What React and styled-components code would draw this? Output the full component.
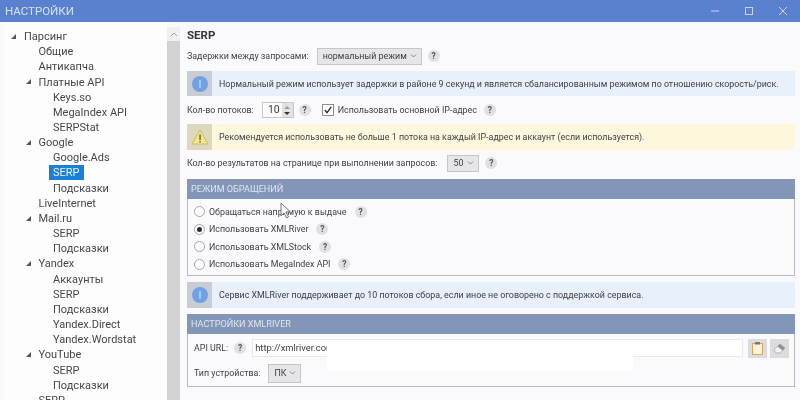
import React from 'react';
import styled, { createGlobalStyle } from 'styled-components';

const GlobalStyle = createGlobalStyle`
    html, body {
        margin: 0;
        padding: 0;
        width: 800px;
        height: 400px;
        overflow: hidden;
        background: #fafafc;
    }
    * {
        box-sizing: border-box;
    }
`;

const Window = styled.div`
    width: 800px;
    height: 400px;
    display: flex;
    flex-direction: column;
    overflow: hidden;
    position: relative;
    font-family: Roboto, 'Noto Sans', sans-serif;
    font-size: 8.9px;
    color: #404045;
    background: #fafafc;
    filter: blur(0.4px);
`;

const TitleBar = styled.div`
    height: 22px;
    flex: none;
    background: #5a80d0;
    display: flex;
    align-items: center;
    padding: 0 0 0 5px;
`;

const TitleText = styled.div`
    flex: 1;
    color: #d5e0f5;
    font-size: 11.5px;
`;

const WinButton = styled.div`
    width: 34px;
    height: 22px;
    display: flex;
    align-items: center;
    justify-content: center;
`;

const Body = styled.div`
    flex: 1;
    display: flex;
    min-height: 0;
`;

const TreePanel = styled.div`
    width: 163px;
    flex: none;
    margin-left: 4px;
    background: #fdfdfe;
    padding-top: 7px;
    overflow: hidden;
    font-size: 11px;
    color: #47474b;
`;

const TreeRow = styled.div`
    height: 15.17px;
    display: flex;
    align-items: center;
    padding-left: ${p => 16 + p.$level * 14.5}px;
    position: relative;
    white-space: nowrap;
`;

const TreeLabel = styled.span`
    padding: 0 4px;
    line-height: 15px;
    background: ${p => (p.$selected ? '#1a7fd6' : 'transparent')};
    color: ${p => (p.$selected ? '#eaf4fd' : 'inherit')};
`;

const Arrow = styled.span`
    position: absolute;
    left: ${p => p.$level * 14.5 + 7}px;
    top: 5px;
    width: 0;
    height: 0;
    border-left: 5px solid transparent;
    border-bottom: 5px solid #55555a;
`;

const Scrollbar = styled.div`
    width: 13px;
    flex: none;
    margin-top: 5px;
    background: #d2d2d4;
    display: flex;
    flex-direction: column;
`;

const ScrollUp = styled.div`
    height: 14px;
    background: #f0f0f2;
    color: #a8a8ac;
    display: flex;
    align-items: center;
    justify-content: center;
`;

const Content = styled.div`
    flex: 1;
    padding: 6px 5px 0 7px;
    display: flex;
    flex-direction: column;
    min-width: 0;
`;

const Heading = styled.div`
    font-weight: 700;
    font-size: 11.5px;
    line-height: 15px;
    height: 15px;
    margin-bottom: 4px;
    color: #35353a;
`;

const Row = styled.div`
    height: ${p => p.$height || 18}px;
    margin-bottom: ${p => p.$after || 0}px;
    display: flex;
    align-items: center;
    white-space: nowrap;
`;

const Label = styled.span`
    margin-right: ${p => p.$gap || 6}px;
`;

const Select = styled.div`
    width: ${p => p.$width}px;
    height: ${p => p.$height || 17}px;
    border: 1px solid #c6c6c8;
    background: #e6e6e8;
    display: flex;
    align-items: center;
    justify-content: space-between;
    padding: 0 4px 0 5px;
    color: #3c3c40;
`;

const Help = styled.span`
    width: 12px;
    height: 12px;
    border-radius: 50%;
    background: #e0e0e2;
    color: #55555a;
    font-size: 8.5px;
    font-weight: 700;
    display: inline-flex;
    align-items: center;
    justify-content: center;
    margin-left: ${p => p.$gap || 6}px;
    flex: none;
`;

const Notice = styled.div`
    height: ${p => p.$height || 25}px;
    margin-bottom: ${p => p.$after || 0}px;
    display: flex;
    align-items: center;
    background: ${p => (p.$warn ? '#fdf8dc' : '#e8f0fc')};
    flex: none;
`;

const NoticeIcon = styled.div`
    width: 25px;
    align-self: stretch;
    background: ${p => (p.$warn ? '#dbd8bc' : '#c8ccd4')};
    display: flex;
    align-items: center;
    justify-content: center;
    margin-right: 7px;
    flex: none;
`;

const Spin = styled.div`
    width: 32px;
    height: 16px;
    border: 1px solid #c6c6c8;
    background: #fcfcfc;
    display: flex;
    align-items: stretch;
    justify-content: flex-end;
`;

const SpinValue = styled.span`
    flex: 1;
    text-align: right;
    line-height: 14px;
    padding-right: 2px;
    font-size: 10.5px;
`;

const SpinArrows = styled.div`
    width: 11px;
    background: #e2e2e4;
    display: flex;
    flex-direction: column;
    align-items: center;
    justify-content: space-around;
    padding: 1px 0;
`;

const Tri = styled.span`
    width: 0;
    height: 0;
    border-left: 3px solid transparent;
    border-right: 3px solid transparent;
    ${p => (p.$down ? 'border-top: 3px solid #333;' : 'border-bottom: 3px solid #999;')}
`;

const Checkbox = styled.span`
    width: 12px;
    height: 12px;
    border: 1px solid #8f8f92;
    background: #fff;
    display: inline-flex;
    align-items: center;
    justify-content: center;
    margin: 0 4px 0 11px;
    flex: none;
`;

const Group = styled.div`
    border: 1px solid #b4bccc;
    border-top: none;
    margin-bottom: ${p => p.$after || 0}px;
    flex: none;
    height: ${p => p.$height}px;
    display: flex;
    flex-direction: column;
`;

const GroupHeader = styled.div`
    height: 20px;
    flex: none;
    margin: 0 -1px;
    background: #8496b8;
    color: #dfe5f0;
    padding-left: 4px;
    display: flex;
    align-items: center;
    font-size: 9.1px;
`;

const RadioList = styled.div`
    padding: 4px 0 0 6px;
    display: flex;
    flex-direction: column;
`;

const Radio = styled.span`
    width: 11px;
    height: 11px;
    border-radius: 50%;
    border: 1px solid #a6a6aa;
    background: #fff;
    margin-right: 4px;
    display: inline-flex;
    align-items: center;
    justify-content: center;
    flex: none;

    &::after {
        content: '';
        width: 5px;
        height: 5px;
        border-radius: 50%;
        background: ${p => (p.$checked ? '#2c2c30' : 'transparent')};
    }
`;

const SettingsBody = styled.div`
    padding: 5px 5px 0 6px;
    display: flex;
    flex-direction: column;
    gap: 7px;
`;

const UrlInput = styled.div`
    flex: 1;
    height: 18px;
    background: #fff;
    border: 1px solid #e8e8ea;
    margin-left: 6px;
    padding-left: 2px;
    line-height: 16px;
    overflow: hidden;
    font-size: 9.4px;
`;

const SquareButton = styled.div`
    width: 19px;
    height: 19px;
    margin-left: ${p => p.$gap}px;
    background: #dcdcde;
    display: flex;
    align-items: center;
    justify-content: center;
    flex: none;
`;

const Redaction = styled.div`
    position: absolute;
    left: 327px;
    top: 340px;
    width: 306px;
    height: 31px;
    background: #fff;
`;

const Cursor = styled.svg`
    position: absolute;
    left: 280px;
    top: 202px;
`;

const TREE = [
    [0, 'Парсинг', true],
    [1, 'Общие'],
    [1, 'Антикапча'],
    [1, 'Платные API', true],
    [2, 'Keys.so'],
    [2, 'MegaIndex API'],
    [2, 'SERPStat'],
    [1, 'Google', true],
    [2, 'Google.Ads'],
    [2, 'SERP', false, true],
    [2, 'Подсказки'],
    [1, 'LiveInternet'],
    [1, 'Mail.ru', true],
    [2, 'SERP'],
    [2, 'Подсказки'],
    [1, 'Yandex', true],
    [2, 'Аккаунты'],
    [2, 'SERP'],
    [2, 'Подсказки'],
    [2, 'Yandex.Direct'],
    [2, 'Yandex.Wordstat'],
    [1, 'YouTube', true],
    [2, 'SERP'],
    [2, 'Подсказки'],
    [1, 'SERP'],
];

const RADIOS = [
    ['Обращаться напрямую к выдаче', false],
    ['Использовать XMLRiver', true],
    ['Использовать XMLStock', false],
    ['Использовать MegaIndex API', false],
];

const InfoIcon = () => (
    <svg width="18" height="18" viewBox="0 0 18 18">
        <circle cx="9" cy="9" r="8" fill="#6ea2e4" />
        <rect x="8.4" y="5" width="1.2" height="8" fill="#cfe0f6" />
    </svg>
);

const WarnIcon = () => (
    <svg width="18" height="16" viewBox="0 0 18 16">
        <path d="M9 1 L17 15 L1 15 Z" fill="#f3e48e" stroke="#c9bb6c" strokeWidth="1" />
        <rect x="8.4" y="5.5" width="1.3" height="5.5" fill="#5a5230" />
        <rect x="8.4" y="12" width="1.3" height="1.4" fill="#5a5230" />
    </svg>
);

const Caret = () => (
    <svg width="7" height="4" viewBox="0 0 7 4">
        <path d="M1 0.5 L3.5 3 L6 0.5" fill="none" stroke="#8a8a8e" strokeWidth="1" />
    </svg>
);

const App = () => (
    <Window>
        <GlobalStyle />
        <TitleBar>
            <TitleText>НАСТРОЙКИ</TitleText>
            <WinButton>
                <svg width="10" height="10" viewBox="0 0 10 10">
                    <path d="M1 5 H9" stroke="#c5d4f0" strokeWidth="1" />
                </svg>
            </WinButton>
            <WinButton>
                <svg width="10" height="10" viewBox="0 0 10 10">
                    <rect x="1.5" y="1.5" width="7" height="7" fill="none" stroke="#c5d4f0" strokeWidth="1" />
                </svg>
            </WinButton>
            <WinButton>
                <svg width="10" height="10" viewBox="0 0 10 10">
                    <path d="M1 1 L9 9 M9 1 L1 9" stroke="#c5d4f0" strokeWidth="1" />
                </svg>
            </WinButton>
        </TitleBar>
        <Body>
            <TreePanel>
                {TREE.map(([level, text, open, selected], i) => (
                    <TreeRow key={i} $level={level}>
                        {open && <Arrow $level={level} />}
                        <TreeLabel $selected={selected}>{text}</TreeLabel>
                    </TreeRow>
                ))}
            </TreePanel>
            <Scrollbar>
                <ScrollUp>
                    <svg width="8" height="5" viewBox="0 0 8 5">
                        <path d="M1 4 L4 1 L7 4" fill="none" stroke="#a8a8ac" strokeWidth="1" />
                    </svg>
                </ScrollUp>
            </Scrollbar>
            <Content>
                <Heading>SERP</Heading>
                <Row $after={6}>
                    <Label $gap={8}>Задержки между запросами:</Label>
                    <Select $width={105}>
                        нормальный режим
                        <Caret />
                    </Select>
                    <Help>?</Help>
                </Row>
                <Notice $after={5}>
                    <NoticeIcon>
                        <InfoIcon />
                    </NoticeIcon>
                    Нормальный режим использует задержки в районе 9 секунд и является сбалансированным режимом по отношению скорость/риск.
                </Notice>
                <Row $height={18} $after={5}>
                    <Label $gap={8}>Кол-во потоков:</Label>
                    <Spin>
                        <SpinValue>10</SpinValue>
                        <SpinArrows>
                            <Tri />
                            <Tri $down />
                        </SpinArrows>
                    </Spin>
                    <Help $gap={5}>?</Help>
                    <Checkbox>
                        <svg width="10" height="10" viewBox="0 0 11 11">
                            <path d="M2 5.5 L4.5 8.5 L9 2" fill="none" stroke="#2c2c30" strokeWidth="1.5" />
                        </svg>
                    </Checkbox>
                    Использовать основной IP-адрес
                    <Help $gap={7}>?</Help>
                </Row>
                <Notice $warn $height={26} $after={3}>
                    <NoticeIcon $warn>
                        <WarnIcon />
                    </NoticeIcon>
                    Рекомендуется использовать не больше 1 потока на каждый IP-адрес и аккаунт (если используется).
                </Notice>
                <Row $height={20} $after={6}>
                    <Label $gap={10}>Кол-во результатов на странице при выполнении запросов:</Label>
                    <Select $width={32}>
                        50
                        <Caret />
                    </Select>
                    <Help>?</Help>
                </Row>
                <Group $height={97} $after={6}>
                    <GroupHeader>РЕЖИМ ОБРАЩЕНИЙ</GroupHeader>
                    <RadioList>
                        {RADIOS.map(([text, checked]) => (
                            <Row key={text} $height={17.5}>
                                <Radio $checked={checked} />
                                {text}
                                <Help $gap={8}>?</Help>
                            </Row>
                        ))}
                    </RadioList>
                </Group>
                <Notice $height={26} $after={6}>
                    <NoticeIcon>
                        <InfoIcon />
                    </NoticeIcon>
                    Сервис XMLRiver поддерживает до 10 потоков сбора, если иное не оговорено с поддержкой сервиса.
                </Notice>
                <Group $height={73}>
                    <GroupHeader>НАСТРОЙКИ XMLRIVER</GroupHeader>
                    <SettingsBody>
                        <Row>
                            API URL:
                            <Help $gap={6}>?</Help>
                            <UrlInput>http://xmlriver.com</UrlInput>
                            <SquareButton $gap={5}>
                                <svg width="11" height="13" viewBox="0 0 11 13">
                                    <rect x="0.5" y="1.5" width="10" height="11" fill="#fdf2d8" stroke="#d9a860" />
                                    <rect x="3" y="0" width="5" height="2.5" fill="#77777b" />
                                </svg>
                            </SquareButton>
                            <SquareButton $gap={3}>
                                <svg width="13" height="13" viewBox="0 0 13 13">
                                    <path d="M1 8 L7 2 L12 6 L7 11 L3 11 Z" fill="#f2f2f4" stroke="#a8a8ac" strokeWidth="0.8" />
                                    <path d="M7 2 L12 6 L9.5 8.5 L4.5 4.5 Z" fill="#8f8f94" />
                                </svg>
                            </SquareButton>
                        </Row>
                        <Row>
                            <Label $gap={8}>Тип устройства:</Label>
                            <Select $width={33} $height={19}>
                                ПК
                                <Caret />
                            </Select>
                        </Row>
                    </SettingsBody>
                </Group>
            </Content>
        </Body>
        <Redaction />
        <Cursor width="12" height="18" viewBox="0 0 12 18">
            <path d="M1 1 L1 14 L4 11 L6.5 16 L8.5 15 L6 10 L10.5 10 Z" fill="#f4f4f6" stroke="#55555c" strokeWidth="0.8" />
        </Cursor>
    </Window>
);

export default App;
